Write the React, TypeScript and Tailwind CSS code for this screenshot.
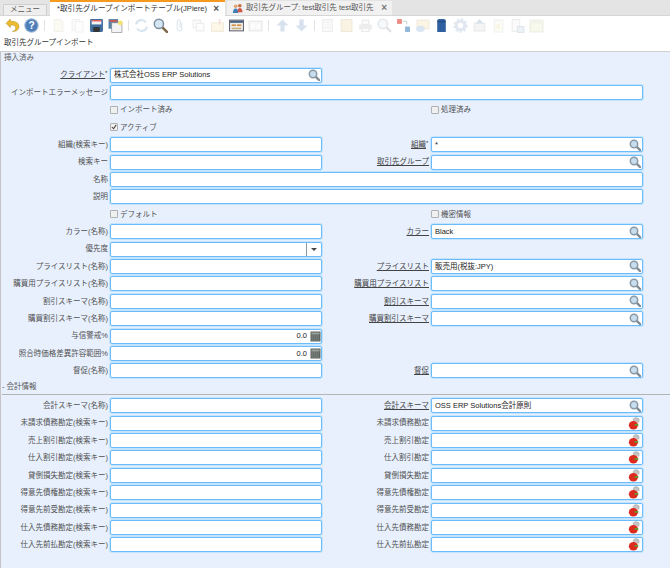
import type { ReactNode } from "react";

const font = "font-['Liberation_Sans','Noto_Sans_CJK_JP',sans-serif]";

function SearchIcon() {
  return (
    <svg viewBox="0 0 12 12" className="h-[12px] w-[12px] shrink-0">
      <path d="M7.6 7.6 11 11" stroke="#7f8b94" strokeWidth="2.4" strokeLinecap="round" />
      <circle cx="5" cy="5" r="3.7" fill="#c6deef" stroke="#8a99a5" strokeWidth="1.5" />
    </svg>
  );
}

function AccountIcon() {
  return (
    <svg viewBox="0 0 12 12" className="h-[13px] w-[13px] shrink-0">
      <path d="M5 4V2.2C5 1.2 6.5.6 8 .8c1.4.2 2.4 1 2.2 2L10 5" fill="#c4c4c4" stroke="#a3a3a3" strokeWidth=".6" />
      <ellipse cx="5" cy="7.6" rx="4.2" ry="3.9" fill="#dc2a1e" />
      <rect x="6" y="6.6" width="3.6" height="1.4" fill="#4fa82e" />
    </svg>
  );
}

function CalcIcon() {
  return (
    <svg viewBox="0 0 11 11" className="h-[11px] w-[11px] shrink-0">
      <rect x=".5" y=".5" width="10" height="10" fill="#5c6360" />
      <rect x="1.5" y="1.5" width="8" height="2" fill="#9aa39c" />
      <path d="M1.5 5h8M1.5 7h8M1.5 9h8" stroke="#9aa39c" strokeWidth=".8" strokeDasharray="1.4 .6" />
    </svg>
  );
}

function Field({
  value,
  kind,
  span,
}: {
  value?: string;
  kind?: "search" | "account" | "select" | "number";
  span?: boolean;
}) {
  return (
    <div
      className={`flex h-[15px] items-center rounded-[2px] border border-[#6cbcfa] bg-white shadow-[0_0_0_1px_#c4e4fd] ${
        span ? "col-span-3" : ""
      }`}
    >
      <span
        className={`min-w-0 flex-1 pl-[3px] text-[7.5px] leading-none text-[#222] ${
          kind === "number" ? "pr-[3px] text-right" : ""
        }`}
      >
        {value}
      </span>
      {kind === "search" && (
        <span className="pr-[1px]">
          <SearchIcon />
        </span>
      )}
      {kind === "account" && (
        <span className="pr-[1px]">
          <AccountIcon />
        </span>
      )}
      {kind === "number" && <CalcIcon />}
      {kind === "select" && (
        <span className="flex h-full w-[15px] items-center justify-center border-l border-[#8a9aa6]">
          <span className="h-0 w-0 border-x-[3px] border-t-[3px] border-x-transparent border-t-[#444]" />
        </span>
      )}
    </div>
  );
}

function Label({ text, link, req }: { text?: string; link?: boolean; req?: boolean }) {
  return (
    <div className="flex items-center justify-end pr-[2px] text-[7.5px] leading-none text-[#505050]">
      <span className={link ? "text-[#444] underline" : ""}>{text}</span>
      {req && <span className="mb-[4px] w-[3px] text-[6px] text-[#333]">*</span>}
    </div>
  );
}

function Check({ text, checked }: { text: string; checked?: boolean }) {
  return (
    <div className="flex items-center gap-[2px] text-[7.5px] leading-none text-[#505050]">
      <span className="flex h-[8px] w-[8px] items-center justify-center rounded-[1px] border border-[#b0b0b0] bg-[#f0f0f0]">
        {checked && (
          <svg viewBox="0 0 7 7" className="h-[6px] w-[6px]">
            <path d="M1 3.5 3 5.5 6 1" fill="none" stroke="#444" strokeWidth="1.2" />
          </svg>
        )}
      </span>
      {text}
    </div>
  );
}

type F = {
  label: string;
  link?: boolean;
  req?: boolean;
  value?: string;
  kind?: "search" | "account" | "select" | "number";
};

function Pair({ left, right }: { left: F; right?: F }) {
  return (
    <>
      <Label text={left.label} link={left.link} req={left.req} />
      <Field value={left.value} kind={left.kind} />
      {right ? (
        <>
          <Label text={right.label} link={right.link} req={right.req} />
          <Field value={right.value} kind={right.kind} />
        </>
      ) : (
        <div className="col-span-2" />
      )}
    </>
  );
}

function CheckRow({ left, right, leftChecked }: { left: string; right?: string; leftChecked?: boolean }) {
  return (
    <>
      <div />
      <Check text={left} checked={leftChecked} />
      <div />
      {right ? <Check text={right} /> : <div />}
    </>
  );
}

const gridCls = "grid grid-cols-[110px_212px_109px_212px] auto-rows-[17.4px] items-center";

const accounts: [string, string][] = [
  ["未請求債務勘定(検索キー)", "未請求債務勘定"],
  ["売上割引勘定(検索キー)", "売上割引勘定"],
  ["仕入割引勘定(検索キー)", "仕入割引勘定"],
  ["貸倒損失勘定(検索キー)", "貸倒損失勘定"],
  ["得意先債権勘定(検索キー)", "得意先債権勘定"],
  ["得意先前受勘定(検索キー)", "得意先前受勘定"],
  ["仕入先債務勘定(検索キー)", "仕入先債務勘定"],
  ["仕入先前払勘定(検索キー)", "仕入先前払勘定"],
];

function Tool({ children, faint }: { children: ReactNode; faint?: boolean }) {
  return (
    <span className={`flex h-[18px] w-[19px] items-center justify-center ${faint ? "opacity-20" : ""}`}>
      <svg viewBox="0 0 14 14" className="h-[15px] w-[15px]">
        {children}
      </svg>
    </span>
  );
}

function Sep() {
  return (
    <span className="flex w-[7.5px] justify-center">
      <span className="h-[11px] w-px bg-[#e2e2e2]" />
    </span>
  );
}

const doc = <path d="M3 1.5h6l2 2v9H3z" fill="#f0e8c8" stroke="#c9c0a0" />;

function Toolbar() {
  return (
    <div className="flex h-[18px] items-center bg-white pl-[3px]">
      <Tool>
        <path d="M5 1 1 5l4 4V6.500c3 0 5 .5 5 3 0 1.500-1.500 2.500-3 3 4 .5 6-2 6-4.500 0-3.500-3-5-8-5z" fill="#edbb2c" stroke="#9a7a1c" strokeWidth=".4" />
      </Tool>
      <Tool>
        <circle cx="7" cy="7" r="6.300" fill="#4f7fb8" stroke="#a9c1dc" />
        <text x="7" y="10.500" textAnchor="middle" fontSize="9.500" fontWeight="700" fill="#fff" fontFamily="Liberation Sans">?</text>
      </Tool>
      <Sep />
      <Tool faint>{doc}</Tool>
      <Tool faint>
        <path d="M2 1.500h7v10H2z" fill="#eee" stroke="#bbb" />
        <path d="M5 3.500h7v9.500H5z" fill="#f6f6f6" stroke="#bbb" />
      </Tool>
      <Tool>
        <rect x="1" y="1" width="12" height="12" rx="1" fill="#3f6d9e" />
        <rect x="2.500" y="2" width="9" height="4" fill="#f4f4f4" />
        <rect x="2.500" y="2" width="9" height="1.200" fill="#e0524a" />
        <rect x="4" y="8.500" width="6" height="4.500" fill="#333" />
      </Tool>
      <Tool>
        <rect x=".5" y="1" width="9" height="9" fill="#5a83aa" />
        <rect x="1.500" y="2" width="7" height="1.500" fill="#d9534a" />
        <rect x="3.500" y="4.500" width="9.500" height="9" fill="#f4f4f4" stroke="#888" strokeWidth=".6" />
        <circle cx="11.500" cy="4.500" r="2.200" fill="#f3e36a" />
      </Tool>
      <Sep />
      <Tool faint>
        <path d="M2 6a5 5 0 0 1 9-2M12 8a5 5 0 0 1-9 2" fill="none" stroke="#3f7fb8" strokeWidth="2" />
      </Tool>
      <Tool>
        <path d="M8.500 8.500 13 13" stroke="#7d6a4a" strokeWidth="2.400" strokeLinecap="round" />
        <circle cx="5.500" cy="5.500" r="4.300" fill="#d5e6f4" stroke="#7e8f9e" strokeWidth="1.400" />
      </Tool>
      <Tool faint>
        <path d="M9 4v6a2 2 0 0 1-4 0V3a1.300 1.300 0 0 1 2.600 0v6" fill="none" stroke="#7a93ad" strokeWidth="1.200" />
      </Tool>
      <Tool faint>
        <path d="M2 2h7v7H2z" fill="#eee" stroke="#aaa" />
        <path d="M5 5h7v7H5z" fill="#f6f6f6" stroke="#aaa" />
      </Tool>
      <Tool faint>
        <path d="M1.500 4.500h11v8h-11z" fill="#f2d98a" stroke="#c4a65a" />
        <path d="M9 1v5" stroke="#d0574a" strokeWidth="1.500" />
      </Tool>
      <Tool>
        <rect x=".5" y="2" width="13" height="10" fill="#eee" stroke="#667" />
        <rect x="1" y="2.500" width="12" height="2" fill="#46627e" />
        <rect x="2.500" y="6" width="4" height="1.500" fill="#d98a3a" />
        <rect x="7.500" y="6" width="4" height="1.500" fill="#d98a3a" />
        <rect x="2.500" y="9" width="9" height="1.500" fill="#c8b27a" />
      </Tool>
      <Tool faint>
        <rect x="1" y="3" width="12" height="9" fill="#ddd" stroke="#888" />
        <path d="M3 6h3v3H3zM8 6h3v3H8z" fill="#fff" />
      </Tool>
      <Sep />
      <Tool faint>
        <path d="M7 1.500 12.500 7H9v5.500H5V7H1.500z" fill="#3f74ac" />
      </Tool>
      <Tool faint>
        <path d="M7 12.500 1.500 7H5V1.500h4V7h3.500z" fill="#3f74ac" />
      </Tool>
      <Sep />
      <Tool faint>
        <path d="M2.500 1.500h9v11h-9z" fill="#eee" stroke="#aaa" />
        <path d="M4 4h6M4 6.500h6M4 9h6" stroke="#bbb" />
      </Tool>
      <Tool faint>
        <rect x="2" y="1.500" width="10" height="11" fill="#e8c877" stroke="#b8964a" />
      </Tool>
      <Tool faint>
        <rect x="1" y="6" width="12" height="5" rx="1" fill="#aaa" />
        <rect x="4" y="2" width="6" height="4" fill="#eee" stroke="#999" />
        <rect x="3.500" y="9.500" width="7" height="3" fill="#eee" stroke="#999" />
      </Tool>
      <Tool faint>
        <path d="M8.500 8.500 13 13" stroke="#777" strokeWidth="2.400" />
        <circle cx="5.500" cy="5.500" r="4.300" fill="#d5e6f4" stroke="#889" strokeWidth="1.400" />
      </Tool>
      <Tool>
        <rect x="1" y="1" width="4.500" height="4.500" fill="#ee8a86" />
        <path d="M6 3h4v3" fill="none" stroke="#bcc" strokeWidth=".8" />
        <rect x="8.500" y="8" width="4.500" height="5" fill="#8fb6d8" />
      </Tool>
      <Tool faint>
        <rect x="2" y="2" width="11" height="8" fill="#f3d27a" stroke="#b89a55" />
        <ellipse cx="5" cy="10" rx="4" ry="3" fill="#4a86c0" />
      </Tool>
      <Tool>
        <path d="M3 2.500Q3 1 5 1h4q2 0 2 1.500V13H3z" fill="#2f5f9e" />
        <path d="M3 3q4 1.400 8 0" fill="none" stroke="#17406f" strokeWidth=".7" />
      </Tool>
      <Tool faint>
        <circle cx="7" cy="7" r="4" fill="none" stroke="#6f8fb5" strokeWidth="3" />
        <circle cx="7" cy="7" r="6" fill="none" stroke="#6f8fb5" strokeWidth="1.500" strokeDasharray="2 2" />
      </Tool>
      <Tool faint>
        <path d="M2 12V5h10v7z" fill="#ccc" stroke="#999" />
        <path d="M7 1 10.500 5H3.500z" fill="#3f74ac" />
      </Tool>
      <Tool faint>
        <path d="M3 2h8v11H3z" fill="#f2f2d8" stroke="#bbb" />
        <path d="M8 5 3 8l5 3z" fill="#e3d16a" />
      </Tool>
      <Tool faint>
        <path d="M2 1.500h7v11H2z" fill="#eee" stroke="#aaa" />
        <rect x="7" y="8" width="6" height="5.500" fill="#9cc1df" stroke="#5f87aa" />
      </Tool>
      <Tool faint>
        <rect x="1" y="2" width="12" height="11" fill="#dbe6a8" stroke="#a0ac68" />
        <rect x="1" y="2" width="12" height="3" fill="#c7c09a" />
      </Tool>
    </div>
  );
}

export default function App() {
  return (
    <div className={`h-[568px] w-[670px] overflow-hidden bg-white ${font}`}>
      {/* tab strip */}
      <div className="flex h-[16px] items-end gap-[2px] border-b border-[#d6d6d6] bg-[#e4e4e4] pl-[3px] text-[7.5px] leading-none text-[#555]">
        <div className="flex h-[11px] w-[44px] items-center justify-center border border-b-0 border-[#d0d0d0] bg-[#eeeeee]">
          メニュー
        </div>
        <div className="-mb-px ml-px flex h-[16px] w-[175px] items-center justify-between border-t-[2px] border-[#f59a1e] bg-white pl-[7px] pr-[6px] text-[#333]">
          <span className="text-[7.6px]">*取引先グループインポートテーブル(JPiere)</span>
          <span className="text-[10px] font-bold text-[#555]">×</span>
        </div>
        <div className="flex h-[14px] w-[165px] items-center gap-[3px] bg-[#f1f1f1] pl-[5px] pr-[5px]">
          <svg viewBox="0 0 12 12" className="h-[11px] w-[11px] shrink-0">
            <circle cx="4" cy="3.500" r="2" fill="#e0a070" />
            <circle cx="8.500" cy="3" r="2" fill="#c2703f" />
            <path d="M1 11c0-3 1-5 3-5s3 2 3 5z" fill="#3f7fb8" />
            <path d="M6 10c0-3 1-4.500 2.500-4.500S11.500 7 11.500 10z" fill="#d0584a" />
          </svg>
          <span className="flex-1 whitespace-nowrap">取引先グループ: test取引先 test取引先</span>
          <span className="text-[10px] font-bold text-[#777]">×</span>
        </div>
      </div>

      <Toolbar />

      <div className="flex h-[18px] items-center border-b border-[#cfcfcf] bg-white pl-[4px] text-[7.5px] leading-none text-[#333]">
        取引先グループインポート
      </div>

      {/* form */}
      <div className="h-[516px] border-l border-[#c4c4c4] bg-[#e8f0fe]">
        <div className="flex h-[14.5px] items-start pl-[3px] pt-[2px] text-[7.5px] leading-none text-[#666]">
          挿入済み
        </div>
        <div className={`-ml-px ${gridCls}`}>
          <Pair left={{ label: "クライアント", link: true, req: true, value: "株式会社OSS ERP Solutions", kind: "search" }} />
          <Label text="インポートエラーメッセージ" />
          <Field span />
          <CheckRow left="インポート済み" right="処理済み" />
          <CheckRow left="アクティブ" leftChecked />
          <Pair
            left={{ label: "組織(検索キー)" }}
            right={{ label: "組織", link: true, req: true, value: "*", kind: "search" }}
          />
          <Pair left={{ label: "検索キー" }} right={{ label: "取引先グループ", link: true, kind: "search" }} />
          <Label text="名称" />
          <Field span />
          <Label text="説明" />
          <Field span />
          <CheckRow left="デフォルト" right="機密情報" />
          <Pair left={{ label: "カラー(名称)" }} right={{ label: "カラー", link: true, value: "Black", kind: "search" }} />
          <Pair left={{ label: "優先度", kind: "select" }} />
          <Pair
            left={{ label: "プライスリスト(名称)" }}
            right={{ label: "プライスリスト", link: true, value: "販売用(税抜:JPY)", kind: "search" }}
          />
          <Pair
            left={{ label: "購買用プライスリスト(名称)" }}
            right={{ label: "購買用プライスリスト", link: true, kind: "search" }}
          />
          <Pair left={{ label: "割引スキーマ(名称)" }} right={{ label: "割引スキーマ", link: true, kind: "search" }} />
          <Pair
            left={{ label: "購買割引スキーマ(名称)" }}
            right={{ label: "購買割引スキーマ", link: true, kind: "search" }}
          />
          <Pair left={{ label: "与信警戒%", value: "0.0", kind: "number" }} />
          <Pair left={{ label: "照合時価格差異許容範囲%", value: "0.0", kind: "number" }} />
          <Pair left={{ label: "督促(名称)" }} right={{ label: "督促", link: true, kind: "search" }} />
        </div>

        <div className="mb-[2px] ml-px h-[15.6px] border-b border-[#b4b4b4] pt-[2px] text-[7.5px] leading-[9px] text-[#555]">
          - 会計情報
        </div>

        <div className={`-ml-px ${gridCls}`}>
          <Pair
            left={{ label: "会計スキーマ(名称)" }}
            right={{ label: "会計スキーマ", link: true, value: "OSS ERP Solutions会計原則", kind: "search" }}
          />
          {accounts.map(([l, r]) => (
            <Pair key={r} left={{ label: l }} right={{ label: r, kind: "account" }} />
          ))}
        </div>
      </div>
    </div>
  );
}
